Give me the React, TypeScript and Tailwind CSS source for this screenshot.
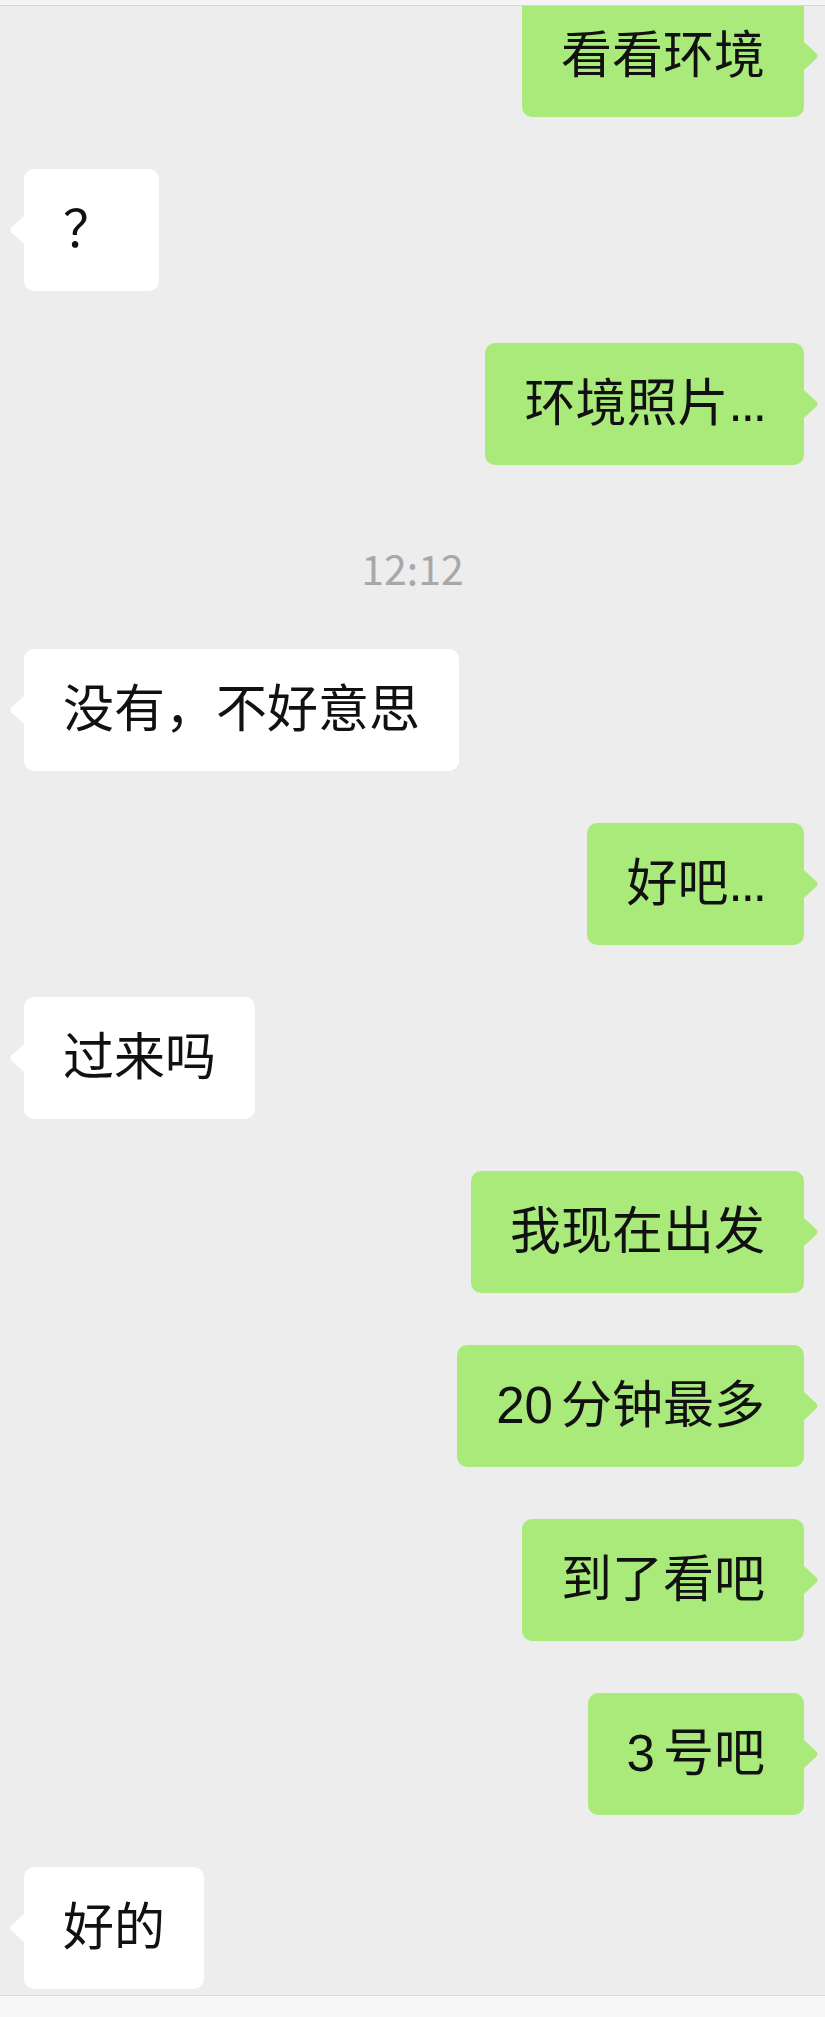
import * as React from "react";

type Side = "me" | "them";

type Msg =
  | { kind: "text"; from: Side; text: React.ReactNode }
  | { kind: "time"; text: string };

// digits sit a little apart from the CJK text that follows them
const Num = ({ children }: { children: React.ReactNode }) => <span className="mr-[8px]">{children}</span>;
// the trailing dots are set tighter than Liberation's periods
const Dots = () => <span className="tracking-[-2px]">...</span>;

const messages: Msg[] = [
  { kind: "text", from: "me", text: "看看环境" },
  { kind: "text", from: "them", text: <span className="pr-[6px]">？</span> },
  {
    kind: "text",
    from: "me",
    text: (
      <>
        环境照片
        <Dots />
      </>
    ),
  },
  { kind: "time", text: "12:12" },
  { kind: "text", from: "them", text: "没有，不好意思" },
  {
    kind: "text",
    from: "me",
    text: (
      <>
        好吧
        <Dots />
      </>
    ),
  },
  { kind: "text", from: "them", text: "过来吗" },
  { kind: "text", from: "me", text: "我现在出发" },
  {
    kind: "text",
    from: "me",
    text: (
      <>
        <Num>20</Num>分钟最多
      </>
    ),
  },
  { kind: "text", from: "me", text: "到了看吧" },
  {
    kind: "text",
    from: "me",
    text: (
      <>
        <Num>3</Num>号吧
      </>
    ),
  },
  { kind: "text", from: "them", text: "好的" },
];

function Tail({ side }: { side: Side }) {
  if (side === "me") {
    return (
      <svg
        className="absolute top-1/2 -right-[15px] -translate-y-1/2"
        width="16"
        height="30"
        viewBox="0 0 16 30"
      >
        <path d="M0 0 L13.4 12.6 Q15.6 15 13.4 17.4 L0 30 Z" fill="#a9ea7a" />
      </svg>
    );
  }
  return (
    <svg
      className="absolute top-1/2 -left-[15px] -translate-y-1/2"
      width="16"
      height="30"
      viewBox="0 0 16 30"
    >
      <path d="M16 0 L2.6 12.6 Q0.4 15 2.6 17.4 L16 30 Z" fill="#ffffff" />
    </svg>
  );
}

function Bubble({ side, children, className }: { side: Side; children: React.ReactNode; className?: string }) {
  const mine = side === "me";
  return (
    <div className={`flex ${mine ? "justify-end pr-[21px]" : "justify-start pl-[24px]"} ${className ?? ""}`}>
      <div
        className={`relative h-[122px] rounded-[10px] px-[39px] py-[36px] text-[51px] leading-[50px] whitespace-nowrap text-[#111111] ${
          mine ? "bg-[#a9ea7a]" : "bg-white"
        }`}
      >
        {children}
        <Tail side={side} />
      </div>
    </div>
  );
}

export default function App() {
  return (
    <div className="flex h-[2017px] w-full flex-col overflow-hidden bg-[#ededed] [font-family:'Liberation_Sans','Noto_Sans_CJK_SC',sans-serif]">
      <div className="h-[6px] shrink-0 border-b border-[#d6d6d6] bg-[#f5f5f5]" />

      <main className="flex flex-1 flex-col overflow-hidden">
        {messages.map((m, i) => {
          const prev = messages[i - 1];
          if (m.kind === "time") {
            return (
              <div
                key={i}
                className="pt-[80px] pb-[60px] text-center text-[41px] leading-[44px] text-[#a8a8a8] [font-family:'Noto_Sans_CJK_SC',sans-serif]"
              >
                {m.text}
              </div>
            );
          }
          const spacing = i === 0 ? "-mt-[11px]" : prev?.kind === "time" ? "mt-0" : "mt-[52px]";
          return (
            <Bubble key={i} side={m.from} className={spacing}>
              {m.text}
            </Bubble>
          );
        })}
      </main>

      <div className="h-[22px] shrink-0 border-t border-[#dadada] bg-[#f7f7f7]" />
    </div>
  );
}
